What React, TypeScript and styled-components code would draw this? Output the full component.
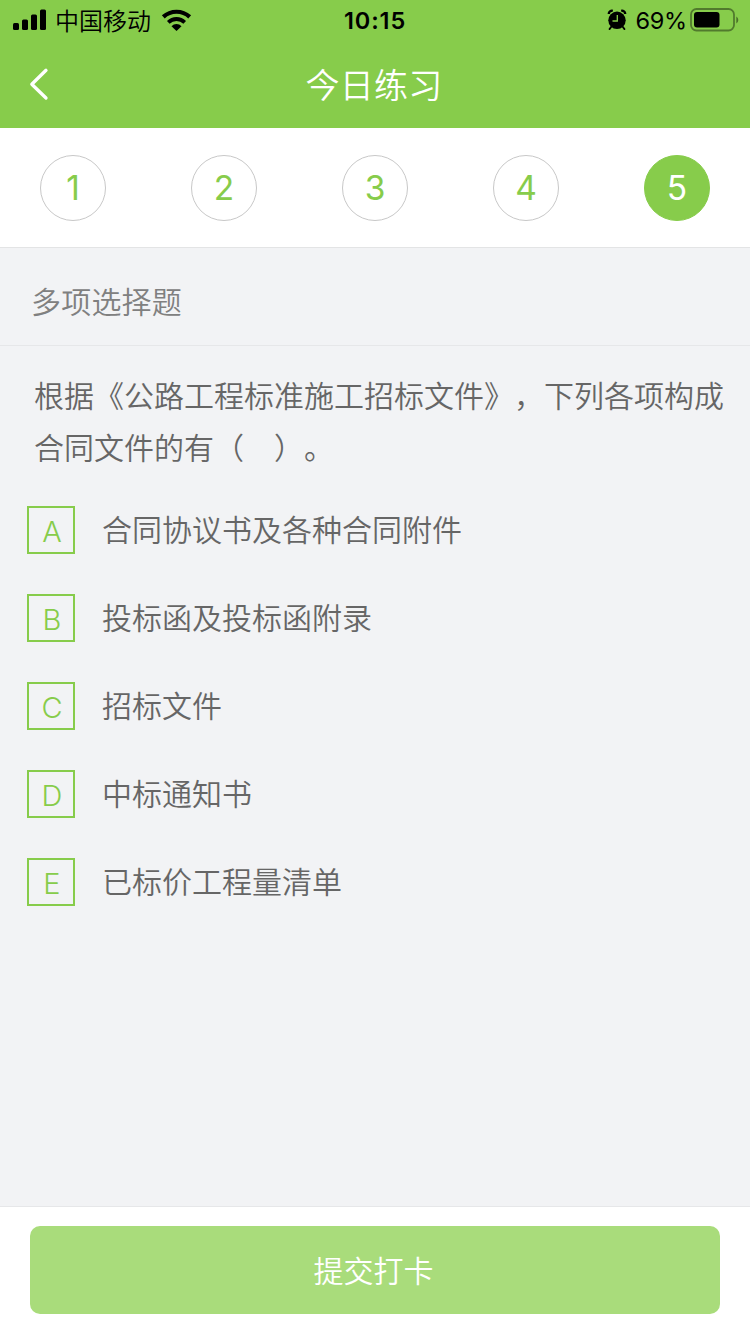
import React from "react";
import styled, { createGlobalStyle, css } from "styled-components";

const GREEN = "#87cc4b";

const GlobalStyle = createGlobalStyle`
  * { box-sizing: border-box; }
  body {
    margin: 0;
    background: #f2f3f5;
    font-family: Inter, "Noto Sans CJK SC", sans-serif;
    text-spacing-trim: space-all;
  }
`;

const Screen = styled.div`
  width: 750px;
  height: 1334px;
  display: flex;
  flex-direction: column;
  background: #f2f3f5;
  overflow: hidden;
`;

const Header = styled.header`
  height: 128px;
  background: ${GREEN};
`;

const StatusBar = styled.div`
  height: 40px;
  display: grid;
  grid-template-columns: 1fr auto 1fr;
  align-items: center;
  color: #000;
`;

const StatusLeft = styled.div`
  display: flex;
  align-items: center;
  padding-left: 13px;
`;

const Carrier = styled.span`
  margin: 0 10px 0 8px;
  font: 350 24px/40px "Noto Sans CJK SC", sans-serif;
`;

const Clock = styled.span`
  padding-top: 2px;
  font-size: 23.5px;
  font-weight: 600;
  letter-spacing: 0.9px;
  line-height: 38px;
`;

const StatusRight = styled.div`
  display: flex;
  align-items: center;
  justify-content: flex-end;
  padding-right: 11px;
`;

const Percent = styled.span`
  padding-top: 2px;
  margin: 0 3px 0 8px;
  font-size: 23.5px;
  font-weight: 400;
  letter-spacing: -0.2px;
  line-height: 38px;
`;

const NavBar = styled.div`
  height: 88px;
  display: grid;
  grid-template-columns: 79px 1fr 81px;
  align-items: center;
`;

const BackButton = styled.button`
  width: 79px;
  height: 88px;
  padding: 0 0 0 28px;
  border: 0;
  background: none;
  display: flex;
  align-items: center;
`;

const Title = styled.h1`
  margin: 0;
  padding-top: 3px;
  text-align: center;
  color: #fff;
  font-size: 34px;
  font-weight: 350;
  letter-spacing: 0.3px;
  line-height: 85px;
`;

const Steps = styled.nav`
  height: 120px;
  padding: 0 40px;
  display: flex;
  align-items: center;
  justify-content: space-between;
  background: #fff;
  border-bottom: 1px solid #e3e4e5;
`;

const Step = styled.button<{ $active: boolean }>`
  width: 66px;
  height: 66px;
  padding: 1px 0 0;
  border-radius: 50%;
  border: 1px solid #c8c8c8;
  background: #fff;
  color: ${GREEN};
  font: 400 33.5px/63px Inter, sans-serif;
  ${({ $active }) =>
    $active &&
    css`
      border-color: ${GREEN};
      background: ${GREEN};
      color: #fff;
    `}
`;

const SectionTitle = styled.h2`
  height: 98px;
  margin: 0;
  padding: 5px 31px 0;
  border-bottom: 1px solid #e6e7e9;
  color: #808080;
  font-size: 30px;
  font-weight: 350;
  letter-spacing: 0.2px;
  line-height: 98px;
`;

const Question = styled.main`
  flex: 1;
  padding: 24px 25px 0 27px;
  color: #666;
`;

const Prompt = styled.p`
  margin: 0 0 0 7px;
  font-size: 30px;
  font-weight: 350;
  line-height: 52px;
`;

const Options = styled.ul`
  margin: 32px 0 0;
  padding: 0;
  list-style: none;
  display: flex;
  flex-direction: column;
  gap: 40px;
`;

const Option = styled.li`
  display: flex;
  align-items: center;
  height: 48px;
  gap: 27px;
  font-size: 30px;
  font-weight: 350;
  line-height: 48px;
`;

const Letter = styled.span`
  width: 48px;
  height: 48px;
  padding-left: 2px;
  border: 2px solid ${GREEN};
  color: ${GREEN};
  font: 350 29px/47px Inter, sans-serif;
  text-align: center;
`;

const Footer = styled.footer`
  height: 128px;
  padding: 19px 30px 0;
  background: #fff;
  border-top: 1px solid #e6e7e9;
`;

const Submit = styled.button`
  display: block;
  width: 100%;
  height: 88px;
  padding: 0 3px 2px 0;
  border: 0;
  border-radius: 10px;
  background: #a9dc7b;
  color: #fff;
  font: 350 30px/86px "Noto Sans CJK SC", sans-serif;
`;

const SignalIcon = () => (
  <svg width="34" height="22" viewBox="0 0 34 22">
    <rect x="0" y="14" width="6" height="7" rx="1.5" />
    <rect x="9" y="10.5" width="6" height="10.5" rx="1.5" />
    <rect x="18" y="5.5" width="6" height="15.5" rx="1.5" />
    <rect x="27" y="0.5" width="6" height="20.5" rx="1.5" />
  </svg>
);

const WifiIcon = () => (
  <svg width="32" height="24" viewBox="0 0 32 24" fill="none" stroke="#000">
    <path d="M2.3 8.9A19.5 19.5 0 0 1 28.7 8.9" strokeWidth="4.2" />
    <path d="M7.3 14.3A11.8 11.8 0 0 1 23.7 14.3" strokeWidth="3.8" />
    <path d="M15.5 23l-5-4.8a7 7 0 0 1 10 0z" fill="#000" stroke="none" />
  </svg>
);

const AlarmIcon = () => (
  <svg width="20" height="22" viewBox="0 0 20 22" fill="none">
    <path d="M1.8 5A3.2 3.2 0 0 1 5.8 1.8M18.2 5A3.2 3.2 0 0 0 14.2 1.8" stroke="#000" strokeWidth="2.4" />
    <circle cx="10" cy="11.3" r="8.7" fill="#000" />
    <path d="M4.5 17.5l-2 2.600M15.5 17.5l2 2.600" stroke="#000" strokeWidth="1.8" strokeLinecap="round" />
    <path d="M10.3 6v6H5.5" stroke={GREEN} strokeWidth="1.3" />
  </svg>
);

const BatteryIcon = () => (
  <svg width="49" height="24" viewBox="0 0 49 24">
    <rect x="1" y="1" width="43" height="21.5" rx="5.5" fill="none" stroke="#000" strokeOpacity="0.4" strokeWidth="1.8" />
    <rect x="4" y="4" width="25.5" height="15.5" rx="3" />
    <path d="M46.3 8.5q2 1 2 3.5t-2 3.5z" fillOpacity="0.45" />
  </svg>
);

const BackIcon = () => (
  <svg width="22" height="34" viewBox="0 0 22 34" fill="none" stroke="#fff" strokeWidth="3.3" strokeLinecap="round" strokeLinejoin="round">
    <path d="M18 3.3L3.8 17.2l14.2 13.8" />
  </svg>
);

const options = [
  ["A", "合同协议书及各种合同附件"],
  ["B", "投标函及投标函附录"],
  ["C", "招标文件"],
  ["D", "中标通知书"],
  ["E", "已标价工程量清单"],
];

export default function App() {
  return (
    <>
      <GlobalStyle />
      <Screen lang="zh-CN">
        <Header>
          <StatusBar>
            <StatusLeft>
              <SignalIcon />
              <Carrier>中国移动</Carrier>
              <WifiIcon />
            </StatusLeft>
            <Clock>10:15</Clock>
            <StatusRight>
              <AlarmIcon />
              <Percent>69%</Percent>
              <BatteryIcon />
            </StatusRight>
          </StatusBar>
          <NavBar>
            <BackButton aria-label="返回">
              <BackIcon />
            </BackButton>
            <Title>今日练习</Title>
          </NavBar>
        </Header>
        <Steps>
          {[1, 2, 3, 4, 5].map((n) => (
            <Step key={n} $active={n === 5}>
              {n}
            </Step>
          ))}
        </Steps>
        <SectionTitle>多项选择题</SectionTitle>
        <Question>
          <Prompt>根据《公路工程标准施工招标文件》，下列各项构成合同文件的有（　）。</Prompt>
          <Options>
            {options.map(([letter, text]) => (
              <Option key={letter}>
                <Letter>{letter}</Letter>
                <span>{text}</span>
              </Option>
            ))}
          </Options>
        </Question>
        <Footer>
          <Submit>提交打卡</Submit>
        </Footer>
      </Screen>
    </>
  );
}
